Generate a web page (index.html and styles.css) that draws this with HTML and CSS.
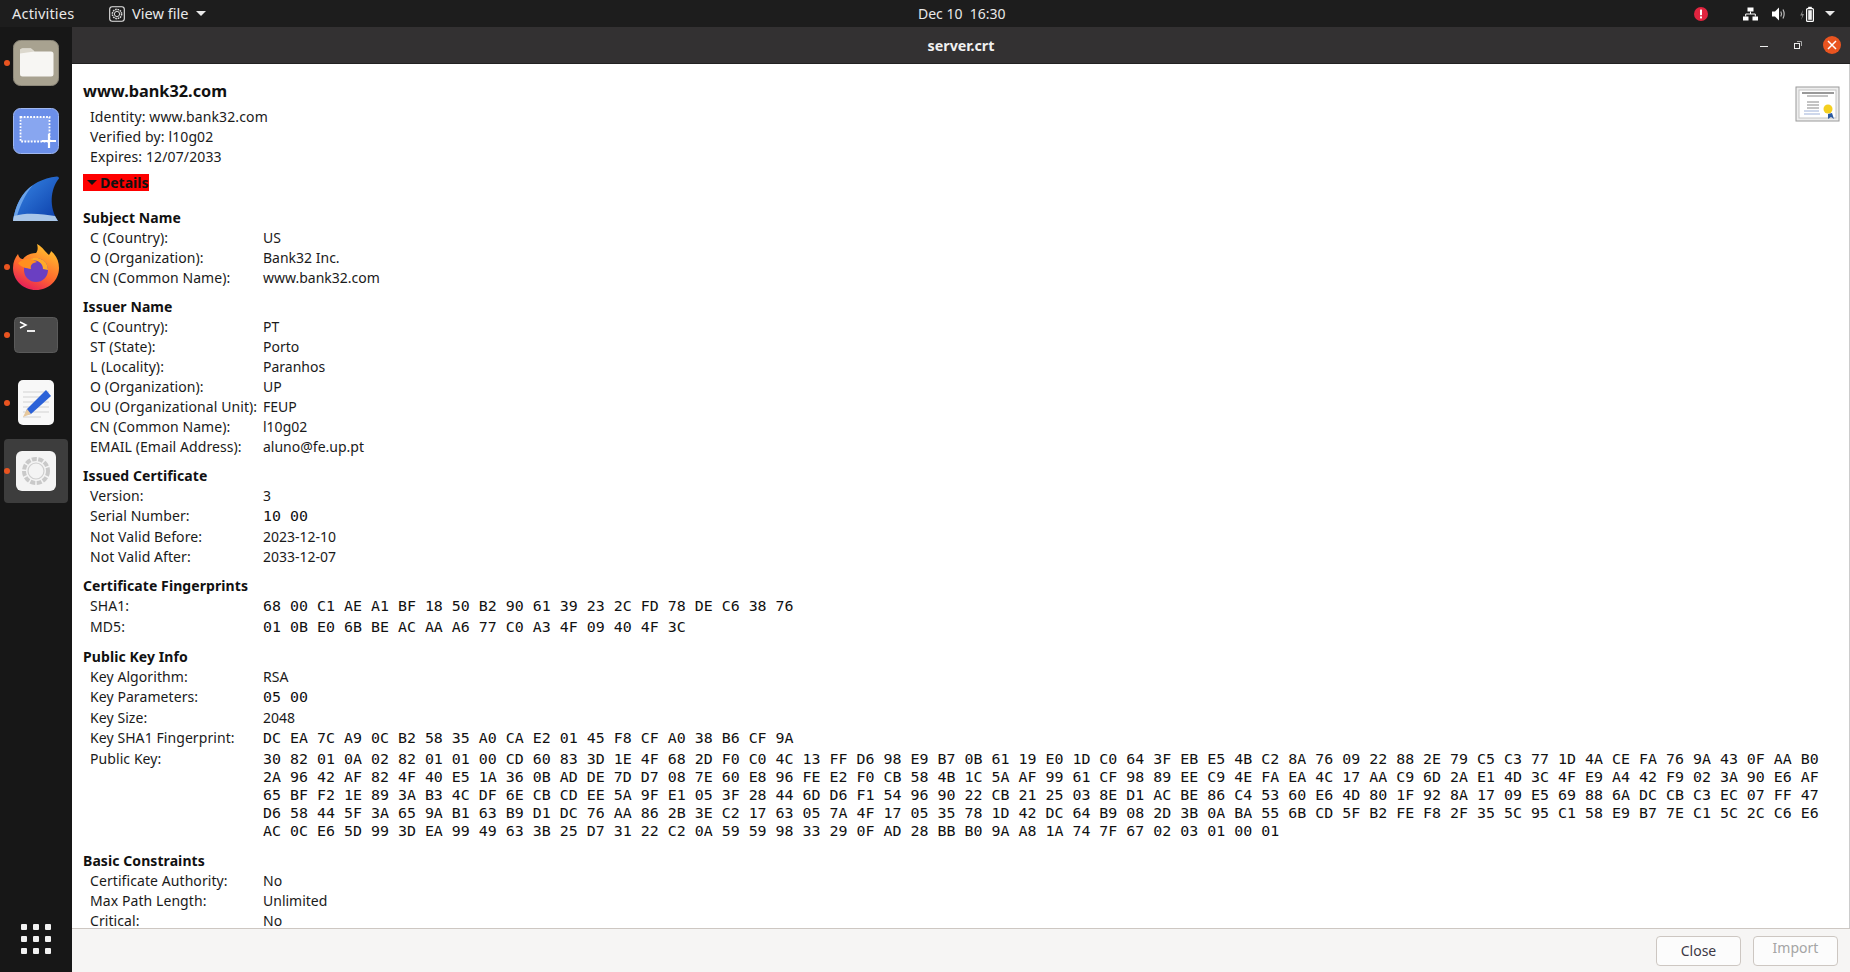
FILE: index.html
```html
<!DOCTYPE html>
<html lang="en">
<head>
<meta charset="utf-8">
<title>server.crt</title>
<link rel="stylesheet" href="styles.css">
</head>
<body>
<header class="topbar">
  <div class="top-left">
    <span class="activities">Activities</span>
    <span class="appmenu">
      <svg class="appicon" viewBox="0 0 16 16" width="16" height="16"><rect x="0.7" y="0.7" width="14.6" height="14.6" rx="2.5" fill="none" stroke="#e6e6e6" stroke-width="1.1"/><circle cx="8" cy="8" r="4.6" fill="none" stroke="#ddd" stroke-width="1.6" stroke-dasharray="1.6 .8"/><circle cx="8" cy="8" r="2.6" fill="none" stroke="#ddd" stroke-width="1"/></svg>
      <span class="apptext">View file</span>
      <span class="caret"></span>
    </span>
  </div>
  <div class="clock">Dec 10&nbsp; 16:30</div>
  <div class="tray">
    <svg class="alert" viewBox="0 0 14 14" width="14" height="14"><circle cx="7" cy="7" r="7" fill="#e0243f"/><rect x="6" y="2.6" width="2" height="5.6" fill="#fff"/><rect x="6" y="9.4" width="2" height="2" fill="#fff"/></svg>
    <svg class="net" viewBox="0 0 15 14" width="15" height="14"><rect x="4.5" y="0.500" width="6" height="4" fill="#fff"/><rect x="0" y="9.500" width="5.500" height="4" fill="#fff"/><rect x="9.500" y="9.500" width="5.500" height="4" fill="#fff"/><path d="M7.500 4.500V7M2.700 9.500V7H12.300V9.500" fill="none" stroke="#fff"/></svg>
    <svg class="vol" viewBox="0 0 14 14" width="14" height="14"><path d="M0 4.500H3L7 0.500V13.500L3 9.500H0Z" fill="#fff"/><path d="M8.800 4.500Q10.300 7 8.800 9.500M11 2.500Q13.300 7 11 11.500" fill="none" stroke="#bbb" stroke-width="1.200"/></svg>
    <svg class="bat" viewBox="0 0 14 16" width="14" height="16"><path d="M3 4L0.200 9.500H2.200L1.200 14L4 8H2.200Z" fill="#888"/><rect x="6.600" y="2.600" width="6.800" height="12.800" rx="1" fill="none" stroke="#fff" stroke-width="1.200"/><rect x="8.200" y="4.200" width="3.600" height="9.600" fill="#eee"/><rect x="8.200" y="0.800" width="3.600" height="1.800" fill="#fff"/></svg>
    <span class="caret"></span>
  </div>
</header>
<div class="desktop">
  <nav class="dock">
    <div class="dock-app"><span class="dot"></span>
      <svg viewBox="0 0 46 46" width="46" height="46"><rect x="0.5" y="0.5" width="45" height="45" rx="7" fill="#a8a290" stroke="#8d887a"/><path d="M7 11a2.500 2.500 0 0 1 2.500-2.500H18l3.500 3H38a2.500 2.500 0 0 1 2.500 2.500V34a2.500 2.500 0 0 1-2.500 2.500H9.500A2.500 2.500 0 0 1 7 34Z" fill="#f7f6f3"/><path d="M7 11a2.500 2.500 0 0 1 2.500-2.500H18l3.500 3-14.500 2Z" fill="#dcd8cd"/></svg>
    </div>
    <div class="dock-app"><svg viewBox="0 0 46 46" width="46" height="46"><rect x="0.5" y="0.500" width="45" height="45" rx="7" fill="#6b8fe9" stroke="#a0b8f0"/><rect x="7.500" y="9" width="29" height="24.500" fill="#88a6f0" stroke="#fff" stroke-width="1.800" stroke-dasharray="1.800 1.400"/><path d="M36 26V40M29 33H43" stroke="#fff" stroke-width="2.200"/></svg></div>
    <div class="dock-app"><svg viewBox="0 0 46 46" width="46" height="46"><defs><linearGradient id="fin" x1="0" y1="0" x2="1" y2="1"><stop offset="0" stop-color="#3a8ae8"/><stop offset="1" stop-color="#0a3ca8"/></linearGradient></defs><path d="M0 45C3 25 14 4 44 0.500Q46 0.500 46 2.500C37 13 36 32 45 45Z" fill="url(#fin)"/><path d="M0 45C2 30 9 16 20 9 12 18 7 30 4 40Z" fill="#6aa3ea"/><path d="M1 40C14 36 30 38 42 40L45 45H0Z" fill="#a9c6e8"/></svg></div>
    <div class="dock-app"><span class="dot"></span>
      <svg viewBox="0 0 46 46" width="46" height="46"><defs><linearGradient id="fox" x1="0.700" y1="0" x2="0.200" y2="1"><stop offset="0" stop-color="#ffc32e"/><stop offset=".55" stop-color="#ff6b2d"/><stop offset="1" stop-color="#e3145f"/></linearGradient></defs><path d="M23 46C10 46 0 36 0 24 0 18 2 14 5 10 6 14 8 15 10 15 13 11 18 9 23 9 25 7 25 3 24 0 30 3 33 9 36 11 37 9 38 8 38 7 43 11 46 17 46 24 46 36 36 46 23 46Z" fill="url(#fox)"/><circle cx="23" cy="26" r="12" fill="#6a3fc2"/><path d="M35 26A12 12 0 0 0 14 18C20 14 30 17 30 25Z" fill="#ffa92a"/><path d="M5 19C11 14 18 14 24 18 19 19 17 21 18 25 13 24 9 24 5 19Z" fill="#ff8f1f"/></svg>
    </div>
    <div class="dock-app"><span class="dot"></span>
      <svg viewBox="0 0 44 36" width="44" height="36"><rect x="0.500" y="0.500" width="43" height="35" rx="4" fill="#4a4a4a" stroke="#5a5a5a"/><path d="M6 5L12 8L6 11" fill="none" stroke="#fff" stroke-width="1.500"/><path d="M13 14H21" stroke="#fff" stroke-width="1.800"/></svg>
    </div>
    <div class="dock-app"><span class="dot"></span>
      <svg viewBox="0 0 38 46" width="38" height="46"><rect width="36" height="45" rx="5" x="1" fill="#f8f8f8"/><path d="M6 12H32M6 17H32M6 22H32M6 27H32M6 32H32M6 37H24" stroke="#d2d2d2"/><path d="M29 10L34 16 14 34 8 35 10 29Z" fill="#2c62d8"/><path d="M10 29L14 34 6 37Z" fill="#e7c89c"/></svg>
    </div>
    <div class="dock-app active"><span class="dot"></span>
      <svg viewBox="0 0 40 40" width="40" height="40"><rect width="40" height="40" rx="6" fill="#f4f4f4"/><circle cx="20" cy="20" r="12" fill="none" stroke="#c9c9c9" stroke-width="4" stroke-dasharray="5 1.500"/><circle cx="20" cy="20" r="8" fill="#f4f4f4" stroke="#cfcfcf" stroke-width="1.200"/></svg>
    </div>
    <div class="grid-btn"><i></i><i></i><i></i><i></i><i></i><i></i><i></i><i></i><i></i></div>
  </nav>
  <main class="window">
    <div class="titlebar">
      <span class="title">server.crt</span>
      <div class="winctl">
        <span class="min"></span>
        <svg class="max" viewBox="0 0 8 8" width="8" height="8"><rect x="0.500" y="2.500" width="5" height="5" fill="none" stroke="#eee"/><path d="M3 .5H7.500V5" fill="none" stroke="#aaa"/></svg>
        <span class="close"><svg viewBox="0 0 10 10" width="10" height="10"><path d="M1 1L9 9M9 1L1 9" stroke="#fff" stroke-width="1.500"/></svg></span>
      </div>
    </div>
    <div class="content">
      <svg class="cert" viewBox="0 0 46 38" width="46" height="38"><rect x="1" y="1" width="43" height="34" fill="#eee" stroke="#9a9a9a"/><rect x="4" y="4" width="37" height="28" fill="#fff" stroke="#c4c4c4"/><path d="M7 7H39" stroke="#777" stroke-width="1.500"/><path d="M12 10H33M12 16H24M12 19H24M12 22H24" stroke="#888"/><path d="M9 25H24M9 28H25" stroke="#9db0d8"/><circle cx="33" cy="23" r="4.500" fill="#f4cf1f"/><path d="M33 28L37 27 39 33 36 31 33 33Z" fill="#2d5aa0"/></svg>
      <h1 class="cn">www.bank32.com</h1>
      <div class="line">Identity: www.bank32.com</div>
      <div class="line">Verified by: l10g02</div>
      <div class="line">Expires: 12/07/2033</div>
      <div class="details"><span class="tri"></span>Details</div>

      <h2 class="h h1st">Subject Name</h2>
      <dl class="kv">
        <dt>C (Country):</dt><dd>US</dd>
        <dt>O (Organization):</dt><dd>Bank32 Inc.</dd>
        <dt>CN (Common Name):</dt><dd>www.bank32.com</dd>
      </dl>
      <h2 class="h">Issuer Name</h2>
      <dl class="kv">
        <dt>C (Country):</dt><dd>PT</dd>
        <dt>ST (State):</dt><dd>Porto</dd>
        <dt>L (Locality):</dt><dd>Paranhos</dd>
        <dt>O (Organization):</dt><dd>UP</dd>
        <dt>OU (Organizational Unit):</dt><dd>FEUP</dd>
        <dt>CN (Common Name):</dt><dd>l10g02</dd>
        <dt>EMAIL (Email Address):</dt><dd>aluno@fe.up.pt</dd>
      </dl>
      <h2 class="h">Issued Certificate</h2>
      <dl class="kv">
        <dt>Version:</dt><dd>3</dd>
        <dt>Serial Number:</dt><dd class="mono">10 00</dd>
        <dt>Not Valid Before:</dt><dd>2023-12-10</dd>
        <dt>Not Valid After:</dt><dd>2033-12-07</dd>
      </dl>
      <h2 class="h">Certificate Fingerprints</h2>
      <dl class="kv">
        <dt>SHA1:</dt><dd class="mono">68 00 C1 AE A1 BF 18 50 B2 90 61 39 23 2C FD 78 DE C6 38 76</dd>
        <dt>MD5:</dt><dd class="mono">01 0B E0 6B BE AC AA A6 77 C0 A3 4F 09 40 4F 3C</dd>
      </dl>
      <h2 class="h">Public Key Info</h2>
      <dl class="kv">
        <dt>Key Algorithm:</dt><dd>RSA</dd>
        <dt>Key Parameters:</dt><dd class="mono">05 00</dd>
        <dt>Key Size:</dt><dd>2048</dd>
        <dt>Key SHA1 Fingerprint:</dt><dd class="mono">DC EA 7C A9 0C B2 58 35 A0 CA E2 01 45 F8 CF A0 38 B6 CF 9A</dd>
        <dt>Public Key:</dt><dd class="mono key">30 82 01 0A 02 82 01 01 00 CD 60 83 3D 1E 4F 68 2D F0 C0 4C 13 FF D6 98 E9 B7 0B 61 19 E0 1D C0 64 3F EB E5 4B C2 8A 76 09 22 88 2E 79 C5 C3 77 1D 4A CE FA 76 9A 43 0F AA B0
2A 96 42 AF 82 4F 40 E5 1A 36 0B AD DE 7D D7 08 7E 60 E8 96 FE E2 F0 CB 58 4B 1C 5A AF 99 61 CF 98 89 EE C9 4E FA EA 4C 17 AA C9 6D 2A E1 4D 3C 4F E9 A4 42 F9 02 3A 90 E6 AF
65 BF F2 1E 89 3A B3 4C DF 6E CB CD EE 5A 9F E1 05 3F 28 44 6D D6 F1 54 96 90 22 CB 21 25 03 8E D1 AC BE 86 C4 53 60 E6 4D 80 1F 92 8A 17 09 E5 69 88 6A DC CB C3 EC 07 FF 47
D6 58 44 5F 3A 65 9A B1 63 B9 D1 DC 76 AA 86 2B 3E C2 17 63 05 7A 4F 17 05 35 78 1D 42 DC 64 B9 08 2D 3B 0A BA 55 6B CD 5F B2 FE F8 2F 35 5C 95 C1 58 E9 B7 7E C1 5C 2C C6 E6
AC 0C E6 5D 99 3D EA 99 49 63 3B 25 D7 31 22 C2 0A 59 59 98 33 29 0F AD 28 BB B0 9A A8 1A 74 7F 67 02 03 01 00 01</dd>
      </dl>
      <h2 class="h">Basic Constraints</h2>
      <dl class="kv">
        <dt>Certificate Authority:</dt><dd>No</dd>
        <dt>Max Path Length:</dt><dd>Unlimited</dd>
        <dt>Critical:</dt><dd>No</dd>
      </dl>
    </div>
    <footer class="actions">
      <button class="btn">Close</button>
      <button class="btn off">Import</button>
    </footer>
  </main>
</div>
</body>
</html>
```
FILE: styles.css
```css
* { box-sizing: border-box; }
html, body { margin: 0; height: 100%; overflow: hidden; }
body {
  font-family: "Noto Sans", "Open Sans", sans-serif;
  font-size: 14px;
  color: #1a1a1a;
  background: #171717;
  display: flex;
  flex-direction: column;
}
.topbar {
  height: 27px;
  flex: none;
  background: #1d1d1d;
  color: #e8e8e8;
  display: grid;
  grid-template-columns: 918px auto 1fr;
  align-items: center;
  font-size: 14.6px;
}
.top-left { display: flex; align-items: center; padding-left: 12px; }
.activities { width: 97px; letter-spacing: .15px; padding-bottom: 2px; }
.appmenu { display: flex; align-items: center; gap: 7px; }
.apptext { padding-bottom: 2px; }
.caret { width: 0; height: 0; border: 5px solid transparent; border-top: 5px solid #e8e8e8; border-bottom: 0; }
.clock { font-size: 14px; }
.tray { display: flex; align-items: center; justify-content: flex-end; padding-right: 15px; }
.alert { margin-right: 35px; }
.net { margin-right: 14px; }
.vol { margin-right: 14px; }
.bat { margin-right: 11px; }
.desktop { flex: 1; display: flex; min-height: 0; }
.dock {
  width: 72px;
  flex: none;
  background: #171717;
  display: flex;
  flex-direction: column;
  align-items: center;
  padding-top: 4px;
}
.dock-app {
  position: relative;
  width: 64px;
  height: 64px;
  margin-bottom: 4px;
  display: flex;
  align-items: center;
  justify-content: center;
  flex: none;
}
.dock-app.active { background: #3d3d3d; border-radius: 4px; }
.dot {
  position: absolute;
  left: 0;
  top: 29px;
  width: 6px;
  height: 6px;
  border-radius: 50%;
  background: #e95420;
}
.grid-btn {
  margin-top: auto;
  margin-bottom: 18px;
  display: grid;
  grid-template-columns: repeat(3, 6px);
  grid-auto-rows: 6px;
  gap: 6px;
}
.grid-btn i { background: #f2f2f2; border-radius: 1px; }
.window { flex: 1; min-width: 0; display: flex; flex-direction: column; background: #fff; }
.titlebar {
  height: 37px;
  flex: none;
  background: #333132;
  border-bottom: 1px solid #222;
  color: #f0f0f0;
  position: relative;
  display: flex;
  align-items: center;
  justify-content: center;
}
.title { font-weight: 700; font-size: 14.3px; }
.winctl {
  position: absolute;
  right: 9px;
  top: 0;
  bottom: 0;
  display: flex;
  align-items: center;
}
.min { width: 8px; height: 1px; background: #eee; margin-right: 26px; margin-top: 3px; }
.max { margin-right: 21px; }
.close {
  width: 18px; height: 18px; border-radius: 50%; background: #e95420;
  display: flex; align-items: center; justify-content: center;
}
.content {
  flex: 1;
  min-height: 0;
  overflow: hidden;
  position: relative;
  padding: 16px 0 0 11px;
  border-right: 1px solid #ccc;
}
.cert { position: absolute; top: 22px; right: 8px; }
.cn { margin: 0 0 5px; font-size: 16.3px; line-height: 22px; font-weight: 700; color: #111; }
.line { line-height: 20px; padding-left: 7px; letter-spacing: .12px; }
.details {
  display: inline-flex;
  align-items: center;
  height: 17px;
  margin-top: 7px;
  padding: 0 1px 0 4px;
  background: #fe0000;
  font-weight: 700;
  font-size: 14px;
  color: #111;
}
.tri { width: 0; height: 0; border: 5px solid transparent; border-top: 5px solid #111; border-bottom: 0; margin-right: 3px; }
.h { margin: 9px 0 0; font-size: 14px; line-height: 20px; font-weight: 700; color: #111; letter-spacing: .08px; }
.h1st { margin-top: 17px; }
.kv {
  margin: 0;
  display: grid;
  grid-template-columns: 173px 1fr;
  align-items: baseline;
  line-height: 20px;
  padding-left: 7px;
}
.kv dt, .kv dd { margin: 0; }
.kv dt { letter-spacing: .08px; }
.mono { font-family: "DejaVu Sans Mono", monospace; font-size: 14.95px; line-height: 20px; padding-bottom: 1px; color: #111; }
.key { white-space: pre; line-height: 18px; padding-bottom: 2px; }
.actions {
  height: 44px;
  flex: none;
  background: #f6f5f4;
  border-top: 1px solid #cdc7c2;
  display: flex;
  justify-content: flex-end;
  align-items: flex-start;
  gap: 12px;
  padding: 7px 12px 0 0;
}
.btn {
  width: 85px;
  height: 30px;
  border: 1px solid #cdc7c2;
  border-radius: 4px;
  background: #fcfcfc;
  font: 14px "Noto Sans", sans-serif;
  color: #3d3846;
  padding: 0 0 2px;
}
.btn.off { color: #a5a5a5; padding-bottom: 7px; }
```
